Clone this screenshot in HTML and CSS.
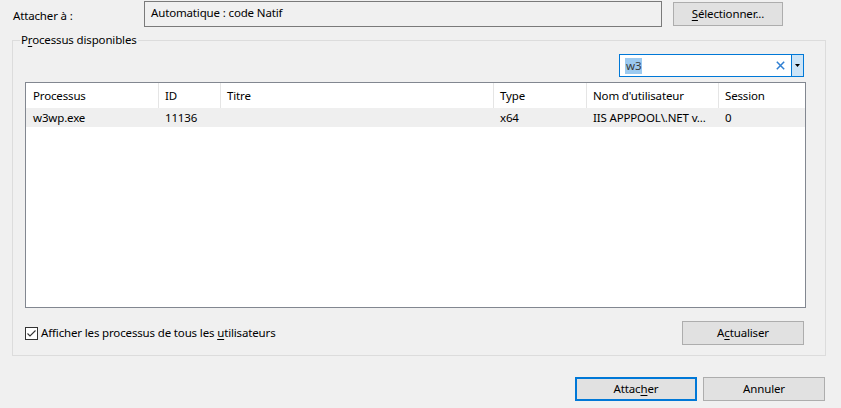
FILE: index.html
```html
<!DOCTYPE html>
<html lang="fr">
<head>
<meta charset="utf-8">
<title>Attacher au processus</title>
<link rel="stylesheet" href="styles.css">
</head>
<body>
<div class="dialog">
  <div class="attach-row">
    <span class="attach-label">Attacher à :</span>
    <div class="attach-box">Automatique : code Natif</div>
    <button class="btn btn-select"><u>S</u>électionner...</button>
  </div>

  <div class="group">
    <span class="legend">P<u>r</u>ocessus disponibles</span>
    <div class="filter-row">
      <div class="filter">
        <span class="filter-text"><span class="sel">w3</span></span>
        <svg class="clear" width="9" height="9" viewBox="0 0 9 9"><path d="M0.8 0.8 L8.2 8.2 M8.2 0.8 L0.8 8.2" stroke="#2f7fd2" stroke-width="1.5" fill="none"/></svg>
        <span class="drop"><svg width="5" height="3" viewBox="0 0 5 3"><path d="M0 0 H5 L2.5 3 Z" fill="#000"/></svg></span>
      </div>
    </div>

    <div class="list">
      <div class="list-head">
        <div class="cell">Processus</div>
        <div class="cell">ID</div>
        <div class="cell">Titre</div>
        <div class="cell">Type</div>
        <div class="cell">Nom d'utilisateur</div>
        <div class="cell">Session</div>
      </div>
      <div class="list-row">
        <div class="cell">w3wp.exe</div>
        <div class="cell">11136</div>
        <div class="cell"></div>
        <div class="cell">x64</div>
        <div class="cell">IIS APPPOOL\.NET v...</div>
        <div class="cell">0</div>
      </div>
    </div>

    <div class="bottom-row">
      <label class="check">
        <span class="box"><svg width="11" height="11" viewBox="0 0 11 11"><path d="M1.5 5.5 L4 8 L9.5 2.5" stroke="#333" stroke-width="1.1" fill="none"/></svg></span>
        <span>Afficher les processus de tous les <u>u</u>tilisateurs</span>
      </label>
      <button class="btn btn-refresh">A<u>c</u>tualiser</button>
    </div>
  </div>

  <div class="footer">
    <button class="btn btn-default">Attac<u>h</u>er</button>
    <button class="btn">Annuler</button>
  </div>
</div>
</body>
</html>
```

FILE: styles.css
```css
html, body {
  margin: 0;
  padding: 0;
}

body {
  width: 841px;
  height: 408px;
  overflow: hidden;
  background: #f0f0f0;
  color: #000;
  font-family: "Noto Sans", "Open Sans", sans-serif;
  font-size: 11.5px;
  letter-spacing: -0.15px;
  line-height: 16px;
}

u {
  text-decoration: underline;
  text-underline-offset: 2px;
}

.dialog {
  padding-top: 1px;
}

.attach-row {
  display: flex;
  align-items: center;
  height: 26px;
  padding-left: 13px;
}

.attach-label {
  width: 131px;
  align-self: flex-start;
  padding-top: 7px;
}

.attach-box {
  box-sizing: border-box;
  width: 518px;
  height: 26px;
  border: 1px solid #7a7a7a;
  padding-left: 6px;
  line-height: 22px;
}

.btn {
  box-sizing: border-box;
  width: 122px;
  height: 24px;
  margin: 0;
  padding: 0;
  border: 1px solid #adadad;
  background: #e1e1e1;
  color: #000;
  font-family: inherit;
  font-size: inherit;
  letter-spacing: inherit;
  line-height: 20px;
  text-align: center;
}

.btn-select {
  width: 110px;
  margin-left: 11px;
}

.btn-default {
  border: 2px solid #0078d7;
}

.group {
  position: relative;
  box-sizing: border-box;
  width: 814px;
  margin: 13px 0 0 12px;
  border: 1px solid #dcdcdc;
  padding: 13px 19px 10px 12px;
}

.legend {
  position: absolute;
  top: -9px;
  left: 7px;
  padding: 0 1px;
  background: #f0f0f0;
}

.filter-row {
  display: flex;
  justify-content: flex-end;
  padding-right: 2px;
}

.filter {
  box-sizing: border-box;
  display: flex;
  align-items: center;
  width: 185px;
  height: 23px;
  border: 1px solid #0078d7;
  background: #fff;
}

.filter-text {
  flex: 1;
  padding-left: 5px;
  color: #3a3a3a;
}

.sel {
  display: inline-block;
  background: #9ccaf0;
  line-height: 16px;
  padding: 0 1px;
}

.clear {
  margin-right: 6px;
}

.drop {
  box-sizing: border-box;
  display: flex;
  align-items: center;
  justify-content: center;
  width: 12px;
  height: 21px;
  border-left: 1px solid #0078d7;
  background: #cce4f7;
}

.list {
  box-sizing: border-box;
  height: 226px;
  margin-top: 5px;
  border: 1px solid #828790;
  background: #fff;
}

.list-head,
.list-row {
  display: grid;
  grid-template-columns: 132px 62px 273px 93px 132px 85px;
}

.list-head {
  height: 25px;
}

.list-head .cell {
  line-height: 25px;
}

.list-head .cell + .cell {
  border-left: 1px solid #e5e5e5;
}

.list-row {
  height: 19px;
  background: #efefef;
}

.list-row .cell {
  line-height: 19px;
}

.list-row .cell + .cell {
  border-left: 1px solid transparent;
}

.cell {
  padding-left: 6px;
  white-space: nowrap;
  overflow: hidden;
}

.cell:first-child {
  padding-left: 7px;
}

.bottom-row {
  display: flex;
  align-items: center;
  justify-content: space-between;
  height: 24px;
  margin-top: 13px;
  padding-right: 2px;
}

.check {
  display: flex;
  align-items: center;
  gap: 3px;
}

.box {
  box-sizing: border-box;
  display: flex;
  align-items: center;
  justify-content: center;
  width: 13px;
  height: 13px;
  border: 1px solid #333;
  background: #fff;
}

.footer {
  display: flex;
  justify-content: flex-end;
  gap: 6px;
  margin-top: 21px;
  padding-right: 16px;
}
```
